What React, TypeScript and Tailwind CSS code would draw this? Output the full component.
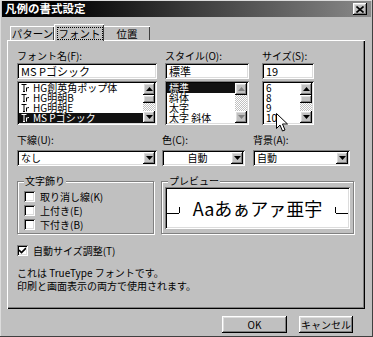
import React from 'react';

const sunken =
  'shadow-[inset_1px_1px_0_#808080,inset_-1px_-1px_0_#ffffff,inset_2px_2px_0_#000000,inset_-2px_-2px_0_#dcdcdc]';
const raised =
  'shadow-[inset_-1px_-1px_0_#000000,inset_1px_1px_0_#ffffff,inset_-2px_-2px_0_#808080,inset_2px_2px_0_#dcdcdc]';
const etched = 'border border-[#808080] shadow-[1px_1px_0_#ffffff,inset_1px_1px_0_#ffffff]';

const Arrow = ({ dir, disabled }: { dir: 'up' | 'down'; disabled?: boolean }) => (
  <div className={`flex h-[12px] w-[12px] items-center justify-center bg-[#c0c0c0] ${raised}`}>
    <svg width="7" height="4" viewBox="0 0 7 4">
      <path
        d={dir === 'up' ? 'M3.5 0L7 4H0Z' : 'M0 0H7L3.5 4Z'}
        fill={disabled ? '#808080' : '#000'}
      />
    </svg>
  </div>
);

const ScrollBar = ({ disabled }: { disabled?: boolean }) => (
  <div className="flex w-[12px] flex-col bg-[repeating-conic-gradient(#c0c0c0_0_25%,#ffffff_0_50%)] bg-[length:2px_2px]">
    <Arrow dir="up" disabled={disabled} />
    {disabled ? <div className="flex-1" /> : <div className={`h-[8px] w-[12px] bg-[#c0c0c0] ${raised}`} />}
    <div className="flex-1" />
    <Arrow dir="down" disabled={disabled} />
  </div>
);

// small "TrueType" mark drawn in front of font names
const TTIcon = () => (
  <svg width="9" height="8" viewBox="0 0 9 8" className="shrink-0">
    <path d="M0.5 0.5H5.5M3 0.5V7.5M2 7.5H4" stroke="currentColor" strokeWidth="1" fill="none" />
    <path d="M5.5 3.5V7.5M5.5 4.5Q6.5 3.5 8 3.5" stroke="currentColor" strokeWidth="1" fill="none" />
  </svg>
);

const ListBox = ({
  items,
  selected,
  disabled,
  icon,
  width,
}: {
  items: string[];
  selected: number;
  disabled?: boolean;
  icon?: boolean;
  width: string;
}) => (
  <div className={`flex h-[44px] ${width} bg-white p-[2px] ${sunken}`}>
    <div className="flex min-w-0 flex-1 flex-col">
      {items.map((it, i) => (
        <div
          key={it}
          className={`flex h-[10px] items-center gap-[3px] whitespace-nowrap pl-[2px] text-[10px] leading-[10px] ${
            i === selected ? 'bg-[#111111] text-white' : 'text-black'
          }`}
        >
          {icon && <TTIcon />}
          <span>{it}</span>
        </div>
      ))}
    </div>
    <ScrollBar disabled={disabled} />
  </div>
);

const Field = ({ value, width }: { value: string; width: string }) => (
  <div className={`flex h-[16px] ${width} items-center bg-white px-[4px] text-[11px] leading-none text-black ${sunken}`}>
    {value}
  </div>
);

const Combo = ({ value, width, center }: { value: string; width: string; center?: boolean }) => (
  <div className={`flex h-[16px] ${width} items-center bg-white p-[2px] ${sunken}`}>
    <div className={`flex-1 px-[2px] text-[10px] leading-none text-black ${center ? 'text-center' : ''}`}>{value}</div>
    <Arrow dir="down" />
  </div>
);

const Check = ({ label, checked }: { label: string; checked?: boolean }) => (
  <div className="flex h-[14px] items-center gap-[5px] text-[10px]">
    <div className={`flex h-[11px] w-[11px] items-center justify-center bg-white ${sunken}`}>
      {checked && (
        <svg width="7" height="7" viewBox="0 0 7 7">
          <path d="M0 3L2.5 5.5L7 1" stroke="#000" strokeWidth="1.6" fill="none" />
        </svg>
      )}
    </div>
    <span>{label}</span>
  </div>
);

export default function App() {
  return (
    <div className="relative h-[337px] w-[373px] overflow-hidden bg-[#c0c0c0] font-['Noto_Sans_CJK_JP',sans-serif] text-black shadow-[inset_-1px_-1px_0_#404040,inset_1px_1px_0_#dcdcdc]">
      {/* title bar */}
      <div className="mx-[2px] mt-[1px] flex h-[16px] items-center justify-between bg-gradient-to-r from-[#000000] via-[#3a3a3a] to-[#8a8a8a] pl-[3px] pr-[4px]">
        <span className="text-[11.5px] font-bold leading-none text-white">凡例の書式設定</span>
        <div className={`flex h-[12px] w-[14px] items-center justify-center bg-[#c0c0c0] ${raised}`}>
          <svg width="8" height="7" viewBox="0 0 8 7">
            <path d="M0.5 0.5L7.5 6.5M7.5 0.5L0.5 6.5" stroke="#000" strokeWidth="1.6" />
          </svg>
        </div>
      </div>

      {/* tabs */}
      <div className="ml-[10px] mt-[6px] flex h-[17px] items-end text-[10.5px]">
        <div className="flex h-[14px] w-[44px] items-center justify-center border-l border-t border-white shadow-[inset_-1px_0_0_#404040]">
          パターン
        </div>
        <div className="relative z-10 mb-[-1px] flex h-[17px] w-[50px] items-center justify-center border-l border-t border-white bg-[#c0c0c0] shadow-[inset_-1px_0_0_#404040]">
          <span className="border border-dotted border-black px-[1px] leading-[11px]">フォント</span>
        </div>
        <div className="flex h-[14px] w-[46px] items-center justify-center border-t border-white shadow-[inset_-1px_0_0_#404040]">
          位置
        </div>
      </div>

      {/* panel */}
      <div className="ml-[7px] h-[269px] w-[358px] border-l border-t border-white px-[9px] pt-[9px] text-[10px] shadow-[inset_-1px_-1px_0_#000000,inset_-2px_-2px_0_#808080]">
        <div className="flex">
          <div className="flex w-[140px] flex-col">
            <span className="h-[13px] leading-[12px]">フォント名(F):</span>
            <Field value="MS Pゴシック" width="w-[140px]" />
            <div className="mt-[2px]">
              <ListBox
                width="w-[140px]"
                icon
                selected={3}
                items={['HG創英角ポップ体', 'HG明朝B', 'HG明朝E', 'MS Pゴシック']}
              />
            </div>
          </div>
          <div className="ml-[8px] flex w-[84px] flex-col">
            <span className="h-[13px] leading-[12px]">スタイル(O):</span>
            <Field value="標準" width="w-[84px]" />
            <div className="mt-[2px]">
              <ListBox width="w-[84px]" disabled selected={0} items={['標準', '斜体', '太字', '太字 斜体']} />
            </div>
          </div>
          <div className="ml-[13px] flex w-[52px] flex-col">
            <span className="h-[13px] leading-[12px]">サイズ(S):</span>
            <Field value="19" width="w-[52px]" />
            <div className="mt-[2px]">
              <ListBox width="w-[52px]" selected={-1} items={['6', '8', '9', '10']} />
            </div>
          </div>
        </div>

        <div className="mt-[9px] flex">
          <div className="flex w-[140px] flex-col">
            <span className="h-[16px] leading-[12px]">下線(U):</span>
            <Combo value="なし" width="w-[140px]" />
          </div>
          <div className="ml-[5px] flex w-[83px] flex-col">
            <span className="h-[16px] leading-[12px]">色(C):</span>
            <Combo value="自動" width="w-[83px]" center />
          </div>
          <div className="ml-[8px] flex w-[97px] flex-col">
            <span className="h-[16px] leading-[12px]">背景(A):</span>
            <Combo value="自動" width="w-[97px]" />
          </div>
        </div>

        <div className="mt-[15px] flex">
          <div className={`relative h-[53px] w-[137px] ${etched} px-[6px] pt-[7px]`}>
            <span className="absolute -top-[7px] left-[6px] bg-[#c0c0c0] px-[1px] leading-[12px]">文字飾り</span>
            <Check label="取り消し線(K)" />
            <Check label="上付き(E)" />
            <Check label="下付き(B)" />
          </div>
          <div className={`relative ml-[7px] h-[53px] w-[193px] ${etched} px-[3px] pb-[4px] pt-[5px]`}>
            <span className="absolute -top-[7px] left-[6px] bg-[#c0c0c0] px-[1px] leading-[12px]">プレビュー</span>
            <div className={`relative flex h-full items-center justify-center bg-white ${sunken}`}>
              <span className="text-[18px] leading-none">Aaあぁアァ亜宇</span>
              <div className="absolute left-[2px] top-[26px] h-px w-[12px] bg-black" />
              <div className="absolute left-[14px] top-[20px] h-[6px] w-px bg-black" />
              <div className="absolute right-[2px] top-[26px] h-px w-[12px] bg-black" />
              <div className="absolute right-[14px] top-[20px] h-[6px] w-px bg-black" />
            </div>
          </div>
        </div>

        <div className="mt-[9px]">
          <Check label="自動サイズ調整(T)" checked />
        </div>

        <div className="mt-[9px] leading-[13px]">
          <div>これは TrueType フォントです。</div>
          <div>印刷と画面表示の両方で使用されます。</div>
        </div>
      </div>

      {/* buttons */}
      <div className="mr-[20px] mt-[7px] flex justify-end gap-[12px] text-[10px]">
        <div className={`flex h-[17px] w-[65px] items-center justify-center ${raised}`}>OK</div>
        <div className={`flex h-[17px] w-[54px] items-center justify-center ${raised}`}>キャンセル</div>
      </div>

      {/* mouse pointer */}
      <svg className="absolute left-[276px] top-[113px]" width="12" height="19" viewBox="0 0 12 19">
        <path d="M0.5 0.5V15.5L4 12L6.5 18L9 17L6.5 11H11.5Z" fill="#fff" stroke="#000" strokeWidth="1" />
      </svg>
    </div>
  );
}
